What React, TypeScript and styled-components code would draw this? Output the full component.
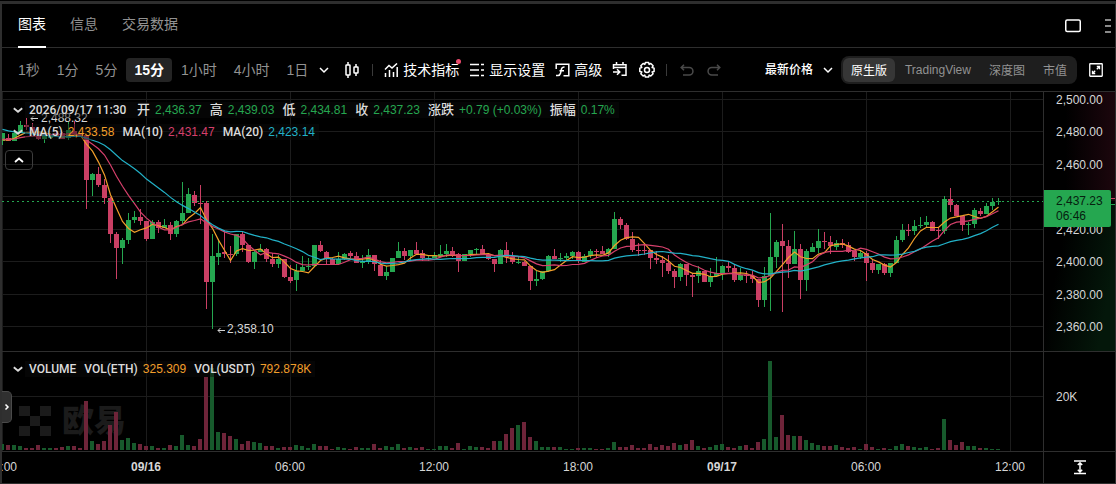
import React from "react";
import styled, { createGlobalStyle } from "styled-components";

const UP = "#25a750";
const DOWN = "#ca3f64";
const AMBER = "#f29f2b";
const PINK = "#d6406c";
const CYAN = "#22b1c7";
const LINE = "#2e2e2e";
const GRID = "#1c1c1c";
const FONT = `"Liberation Sans", "Noto Sans CJK SC", sans-serif`;
const LABEL_FONT = `Roboto, "Noto Sans CJK SC", sans-serif`;

const GlobalStyle = createGlobalStyle`
  *, *::before, *::after { box-sizing: border-box; }
  body { margin: 0; background: #000; color: #fff; font-family: ${FONT}; }
  button, select { font: inherit; color: inherit; background: none; border: 0; margin: 0; padding: 0; cursor: pointer; }
  svg { display: block; }
`;

/* ---------- market data: [dir, high, bodyTop, bodyBottom, low, volume] in chart units ---------- */
type Bar = [number, number, number, number, number, number];
const G = 1;
const R = 0;
const bars: Bar[] = [
  [G,133,133,141,145,6],[R,134,138,141,141,5],[G,131,133,141,141,5],[G,121,125,133,133,4],[R,118,125,127,130,2],
  [R,123,127,133,134,2],[R,133,133,139,140,5],[G,136,136,139,143,2],[G,133,134,138,139,2],[R,131,133,136,137,2],
  [R,132,133,139,139,3],[G,122,130,138,140,4],[R,121,131,134,137,4],[R,133,134,135,136,2],[R,135,135,180,209,49],
  [G,173,174,180,196,9],[R,167,174,185,187,6],[R,179,185,198,204,9],[R,197,198,234,243,25],[R,232,234,248,279,38],
  [G,238,240,248,264,10],[G,213,220,240,244,12],[G,211,217,220,223,7],[R,209,217,221,225,6],[R,221,221,239,241,4],
  [G,220,222,239,239,4],[R,220,222,228,233,2],[G,219,225,228,228,2],[R,222,225,234,240,5],[G,220,221,234,237,4],
  [G,182,213,221,225,15],[G,188,194,213,213,5],[R,191,195,203,206,4],[R,185,203,204,224,11],[R,201,203,282,309,73],
  [G,234,256,282,329,82],[G,239,253,257,265,18],[R,230,252,254,258,17],[R,246,254,255,263,14],[G,234,234,254,256,11],
  [R,232,234,245,252,6],[R,245,245,262,263,9],[G,250,252,262,269,8],[G,244,249,252,252,7],[R,248,249,259,262,4],
  [R,253,259,264,267,4],[G,255,259,264,268,2],[R,259,259,277,278,3],[R,265,277,281,283,3],[G,264,271,280,291,5],
  [G,256,267,271,271,4],[G,258,266,267,270,2],[G,245,245,266,266,6],[R,241,245,251,252,4],[R,251,252,259,265,4],
  [R,258,259,264,265,1],[G,252,259,264,265,3],[G,253,254,259,260,2],[R,251,253,256,258,1],[R,252,256,263,263,3],
  [G,255,261,263,268,2],[G,249,255,261,264,2],[R,255,255,264,271,6],[R,260,265,276,276,2],[G,266,272,276,280,4],
  [G,258,258,272,272,3],[G,242,251,258,258,6],[R,248,251,256,260,2],[G,250,250,256,260,3],[R,242,250,254,254,2],
  [R,250,253,258,261,3],[G,255,258,259,261,1],[G,252,255,258,258,1],[G,245,254,256,257,4],[G,244,251,254,257,4],
  [R,247,251,255,257,2],[R,253,254,261,272,7],[G,254,254,261,261,1],[G,250,250,254,257,4],[G,248,249,250,254,3],
  [R,245,249,254,254,3],[R,253,254,259,260,2],[R,259,259,264,272,9],[G,249,250,264,264,9],[R,242,250,257,263,16],
  [R,252,257,262,264,22],[G,257,262,263,264,25],[R,261,262,266,266,28],[R,266,266,281,290,13],[G,271,279,281,286,9],
  [G,271,271,279,280,3],[G,255,256,271,272,3],[R,249,256,259,259,3],[G,253,258,259,262,3],[G,253,256,258,261,1],
  [G,251,252,256,259,1],[R,251,252,261,263,2],[G,254,256,262,262,2],[G,249,251,256,258,2],[R,249,251,252,258,1],
  [R,246,251,254,254,1],[G,248,249,254,257,2],[G,212,219,249,249,8],[R,217,219,225,229,3],[R,223,225,239,240,3],
  [R,232,239,250,252,5],[R,243,250,251,256,2],[R,244,250,251,255,2],[R,250,250,258,269,6],[R,251,258,260,264,3],
  [R,256,260,263,277,5],[R,255,263,271,274,4],[R,269,271,277,288,7],[G,263,264,277,281,5],[R,264,264,275,286,6],
  [R,274,275,277,297,10],[G,266,271,276,283,4],[R,271,271,282,282,2],[G,268,276,282,287,3],[G,257,273,276,276,5],
  [G,265,266,273,280,6],[R,262,266,268,272,3],[R,265,268,280,282,2],[G,268,275,280,281,4],[R,271,275,276,283,5],
  [R,271,276,279,283,2],[R,279,279,300,307,8],[G,267,276,300,307,11],[G,213,257,276,311,89],[G,240,242,257,268,13],
  [R,224,241,246,312,35],[R,240,246,264,278,15],[G,231,249,264,264,14],[R,244,249,280,299,14],[G,249,251,280,291,10],
  [G,243,247,252,252,7],[G,229,241,248,253,5],[R,232,241,242,249,4],[R,236,242,246,254,4],[G,240,243,247,250,5],
  [R,239,243,245,248,3],[R,242,245,252,253,2],[R,251,251,257,261,3],[G,251,253,257,259,1],[R,251,253,263,281,6],
  [R,260,263,270,273,3],[G,264,264,270,274,1],[R,263,264,273,275,2],[G,263,263,273,277,1],[G,236,240,263,263,4],
  [G,224,230,240,242,6],[R,224,230,231,236,4],[G,220,226,231,235,3],[G,217,225,226,228,2],[G,216,222,225,227,3],
  [R,221,222,231,231,1],[R,227,230,231,239,2],[G,196,199,231,234,31],[R,188,199,205,212,10],[R,204,205,216,216,5],
  [R,216,216,225,231,8],[G,222,224,225,235,4],[G,208,210,224,228,4],[R,208,211,214,216,2],[G,203,206,214,214,2],
  [G,198,202,206,210,1],[G,198,201,202,205,1],
];

/* closes that precede the visible range, so the averages start at the left edge */
const earlier = [110,112,114,116,118,120,122,124,126,128,138,138,138,138,138,141,141,141,141];
const closes = [...earlier, ...bars.map((b) => (b[0] ? b[2] : b[3]))];
const TOP = 92;
const STEP = 6;

function average(n: number) {
  return bars
    .map((_, i) => {
      const end = i + earlier.length + 1;
      const sum = closes.slice(end - n, end).reduce((a, c) => a + c, 0);
      return `${i * STEP + 0.5},${(sum / n - TOP + 0.5).toFixed(1)}`;
    })
    .join(" ");
}

const priceLines = [
  { y: 7, label: "2,500.00" },
  { y: 39, label: "2,480.00" },
  { y: 72, label: "2,460.00" },
  { y: 104, label: "" },
  { y: 137, label: "2,420.00" },
  { y: 169, label: "2,400.00" },
  { y: 202, label: "2,380.00" },
  { y: 234, label: "2,360.00" },
];
const timeLines = [
  { x: 0, label: "18:00" },
  { x: 144, label: "09/16", strong: true },
  { x: 288, label: "06:00" },
  { x: 432, label: "12:00" },
  { x: 576, label: "18:00" },
  { x: 720, label: "09/17", strong: true },
  { x: 864, label: "06:00" },
  { x: 1008, label: "12:00" },
];

/* ---------- layout ---------- */
const Panel = styled.main`
  margin-top: 1px;
  border: solid ${LINE};
  border-width: 3px 1px 1px 2px;
  overflow: hidden;
`;
const Header = styled.header`
  display: flex;
  align-items: stretch;
  justify-content: space-between;
  height: 44px;
  padding: 0 4px 0 16px;
  border-bottom: 1px solid ${LINE};
`;
const Tabs = styled.nav`
  display: flex;
  gap: 24px;
`;
const Tab = styled.button<{ $active?: boolean }>`
  height: 44px;
  padding-bottom: 4px;
  font-size: 14px;
  color: ${(p) => (p.$active ? "#fff" : "#929292")};
  border-bottom: 2px solid ${(p) => (p.$active ? "#fff" : "transparent")};
`;
const HeaderTools = styled.div`
  display: flex;
  align-items: center;
  gap: 24px;
`;
const Toolbar = styled.div`
  display: flex;
  align-items: center;
  justify-content: space-between;
  height: 44px;
  padding: 0 12px 0 8px;
  border-bottom: 1px solid ${LINE};
  white-space: nowrap;
`;
const Group = styled.div<{ $gap?: number; $before?: number }>`
  display: flex;
  align-items: center;
  gap: ${(p) => p.$gap ?? 0}px;
  margin-left: ${(p) => p.$before ?? 0}px;
`;
const Interval = styled.button<{ $active?: boolean }>`
  height: 24px;
  padding: 0 8px;
  border-radius: 4px;
  font-size: 14px;
  line-height: 24px;
  font-weight: ${(p) => (p.$active ? 700 : 400)};
  color: ${(p) => (p.$active ? "#fff" : "#929292")};
  background: ${(p) => (p.$active ? "#242424" : "none")};
`;
const Tool = styled.button<{ $muted?: boolean }>`
  position: relative;
  display: flex;
  align-items: center;
  gap: 4px;
  height: 24px;
  font-size: 14px;
  line-height: 24px;
  color: ${(p) => (p.$muted ? "#4a4a4a" : "#fff")};
`;
const Dot = styled.span`
  position: absolute;
  top: 1px;
  right: -2px;
  width: 5px;
  height: 5px;
  border-radius: 50%;
  background: #eb4b6d;
`;
const Divider = styled.span`
  width: 1px;
  height: 12px;
  background: #3a3a3a;
`;
const PriceSelect = styled.label`
  display: flex;
  align-items: center;
  gap: 9px;
  margin-right: 8px;
  select {
    appearance: none;
    font-size: 12px;
    font-weight: 500;
    line-height: 16px;
    outline: 0;
  }
`;
const Segments = styled.div`
  display: flex;
  gap: 2px;
  height: 28px;
  padding: 2px;
  margin-right: 12px;
  border-radius: 8px;
  background: #1e1e1e;
`;
const Segment = styled.button<{ $active?: boolean }>`
  padding: 0 8px;
  border-radius: 6px;
  font-size: 12px;
  color: ${(p) => (p.$active ? "#fff" : "#929292")};
  background: ${(p) => (p.$active ? "#363636" : "none")};
`;
const Row = styled.section<{ $line?: boolean }>`
  display: flex;
  border-bottom: ${(p) => (p.$line ? `1px solid ${LINE}` : "0")};
`;
const Plot = styled.div`
  position: relative;
  flex: 1;
  min-width: 0;
  overflow: hidden;
`;
const Axis = styled.div`
  position: relative;
  display: flex;
  align-items: center;
  flex: 0 0 72px;
  border-left: 1px solid ${LINE};
`;
const Canvas = styled.svg<{ $height: number }>`
  position: relative;
  width: 100%;
  height: ${(p) => p.$height}px;
  font-family: ${FONT};
  font-size: 12px;
  fill: #d6d6d6;
`;
const Legends = styled.div<{ $top: number }>`
  position: absolute;
  top: ${(p) => p.$top}px;
  left: 3px;
  display: flex;
  flex-direction: column;
  align-items: flex-start;
  gap: 6px;
`;
const Legend = styled.div`
  display: flex;
  align-items: center;
  gap: 2px;
  padding-left: 8px;
  height: 16px;
  font-family: ${LABEL_FONT};
  font-size: 12px;
  font-weight: 500;
  line-height: 16px;
  color: #dcdcdc;
  white-space: nowrap;
`;
const LegendValues = styled.div`
  display: flex;
  gap: 8px;
  padding: 0 4px;
  background: rgba(10, 10, 10, 0.45);
`;
const Stamp = styled.time`
  min-width: 100px;
`;
const Pair = styled.span<{ $cjk?: boolean }>`
  display: flex;
  gap: 5px;
  font-size: ${(p) => (p.$cjk ? 13 : 12)}px;
`;
const Value = styled.span<{ $color: string }>`
  font-family: ${FONT};
  font-size: 12px;
  font-weight: 400;
  color: ${(p) => p.$color};
`;
const Collapse = styled.button`
  display: flex;
  align-items: center;
  justify-content: center;
  width: 28px;
  height: 20px;
  margin-top: 4px;
  border: 1px solid #3d3d3d;
  border-radius: 4px;
`;
const PriceTag = styled.div`
  position: absolute;
  top: 98px;
  left: 0;
  width: 67px;
  padding: 4px 0 3px 12px;
  border-radius: 0 2px 2px 0;
  background: ${UP};
  color: #06210f;
  font-size: 12px;
  line-height: 15px;
`;
const Drawer = styled.button`
  position: absolute;
  top: 39px;
  left: 0;
  display: flex;
  align-items: center;
  justify-content: center;
  width: 10px;
  height: 32px;
  border-radius: 0 5px 5px 0;
  border: 1px solid #4a4a4a;
  border-left: 0;
  background: #303030;
`;
const Watermark = styled.div`
  position: absolute;
  left: 17px;
  top: 53px;
  display: flex;
  align-items: center;
  gap: 11px;
  height: 32px;
  font-size: 32px;
  font-weight: 900;
  line-height: 32px;
  color: #1b1b1b;
`;
const ScaleButton = styled.button`
  margin: 0 auto;
`;

/* ---------- icons ---------- */
type IconProps = { w: number; h: number; children: React.ReactNode; sw?: number };
const Icon = ({ w, h, children, sw = 1.5 }: IconProps) => (
  <svg width={w} height={h} viewBox={`0 0 ${w} ${h}`} fill="none" stroke="currentColor" strokeWidth={sw} aria-hidden>
    {children}
  </svg>
);
const ChevronDown = () => (
  <Icon w={10} h={10}><path d="M1 3l4 4 4-4" /></Icon>
);
const LegendChevron = () => (
  <Icon w={10} h={10} sw={1.8}><path d="M.8 3.2L5 6.8l4.2-3.6" /></Icon>
);

const Pairs = ({ label, value, color, cjk }: { label: string; value: string; color: string; cjk?: boolean }) => (
  <Pair $cjk={cjk}>
    <span>{label}</span>
    <Value $color={color}>{value}</Value>
  </Pair>
);

const VerticalGrid = () => (
  <>
    {timeLines.map((t) => (
      <rect key={t.x} x={t.x} y={0} width={1} height="100%" fill={GRID} />
    ))}
  </>
);

const PricePlot = () => (
  <Canvas $height={259} aria-label="Price">
    <VerticalGrid />
    {priceLines.map((p) => (
      <rect key={p.y} x={0} y={p.y} width="100%" height={1} fill={GRID} />
    ))}
    {bars.map(([dir, high, top, bottom, low], i) => (
      <g key={i} fill={dir ? UP : DOWN}>
        <rect x={i * STEP} y={high - TOP} width={1} height={low - high} />
        <rect x={i * STEP - 2} y={top - TOP} width={5} height={Math.max(1, bottom - top)} />
      </g>
    ))}
    <g fill="none" strokeWidth={1.2}>
      <polyline points={average(5)} stroke={AMBER} />
      <polyline points={average(10)} stroke={PINK} />
      <polyline points={average(20)} stroke={CYAN} />
    </g>
    <line x1={0} x2="100%" y1={109.5} y2={109.5} stroke={UP} strokeDasharray="2 3" />
    <g stroke="#d2d2d2" fill="none">
      <path d="M36 26.5h-7M31.5 24l-2.5 2.5 2.5 2.5" />
      <path d="M223 238.5h-7M218.5 236l-2.5 2.5 2.5 2.5" />
    </g>
    <text x={39} y={30}>2,488.32</text>
    <text x={225} y={241}>2,358.10</text>
  </Canvas>
);

const VolumePlot = () => (
  <Canvas $height={99} aria-label="Volume">
    <VerticalGrid />
    <rect x={0} y={44} width="100%" height={1} fill={GRID} />
    {bars.map(([dir, , , , , volume], i) => (
      <rect key={i} x={i * STEP - 2} y={98 - volume} width={4} height={volume} fill={dir ? "#175a2c" : "#6e2439"} />
    ))}
  </Canvas>
);

const segments = ["原生版", "TradingView", "深度图", "市值"];
const intervals = ["1秒", "1分", "5分", "15分", "1小时", "4小时", "1日"];

export default function App() {
  return (
    <>
      <GlobalStyle />
      <Panel>
        <Header>
          <Tabs>
            <Tab $active>图表</Tab>
            <Tab>信息</Tab>
            <Tab>交易数据</Tab>
          </Tabs>
          <HeaderTools>
            <Tool aria-label="布局">
              <Icon w={16} h={14}><rect x="0.75" y="1" width="14.5" height="11.5" rx="1.5" /></Icon>
            </Tool>
            <Tool aria-label="更多">
              <Icon w={6} h={16} sw={2}><path stroke="#8a8a8a" d="M0 2h6M0 8h6M0 14h6" /></Icon>
            </Tool>
          </HeaderTools>
        </Header>

        <Toolbar>
          <Group>
            <Group $gap={1}>
              {intervals.map((t) => (
                <Interval key={t} $active={t === "15分"}>{t}</Interval>
              ))}
            </Group>
            <Group $gap={16} $before={3}>
              <Tool aria-label="更多周期"><ChevronDown /></Tool>
              <Tool aria-label="图表类型">
                <Icon w={14} h={16}>
                  <rect x="1" y="3" width="4" height="10" rx="0.5" />
                  <rect x="9" y="5" width="4" height="6" rx="0.5" />
                  <path d="M3 0v3M3 13v3M11 2v3M11 11v3" />
                </Icon>
              </Tool>
            </Group>
            <Group $gap={10} $before={13}>
              <Divider />
              <Tool>
                <Icon w={16} h={14}>
                  <path d="M2 6.5l4-4 3 2.5 5-4.5M2.5 14v-4M6.5 14V7M10.5 14V9M14.2 14V4" />
                </Icon>
                技术指标
                <Dot />
              </Tool>
              <Tool>
                <Icon w={16} h={14}>
                  <path d="M1 1.5h9M1 7h9M1 12.5h9M12 1.5h3M12 7h3M12 12.5h3" />
                </Icon>
                显示设置
              </Tool>
              <Tool>
                <Icon w={15} h={14}>
                  <path d="M1.2 6V1.2h12.6v11.6H8.5M1 12.6h2c1.6 0 2.1-.8 2.5-2.3l1-4.3c.4-1.6 1-2 3-2M4.5 7.8h4.5" />
                </Icon>
                高级
              </Tool>
              <Tool aria-label="跳转日期">
                <Icon w={16} h={15}>
                  <path d="M1.5 7V2.7h12.5v10.6H9.5M1.5 5.5h12.5M4.5 0v3M11 0v3M1 10h6.5M5 7.2L7.8 10 5 12.8" />
                </Icon>
              </Tool>
              <Tool aria-label="设置">
                <Icon w={18} h={18}>
                  <circle cx="9" cy="9" r="2.5" />
                  <path strokeLinejoin="round" d="M7.4 1.5h3.2l.5 1.9 1.7-.9 2.3 2.3-1 1.7 2 .6v3.4l-2 .5 1 1.8-2.3 2.2-1.7-.9-.5 2H7.4l-.6-2-1.7.9-2.3-2.2 1-1.8-2-.5V7.1l2-.6-1-1.7 2.3-2.3 1.7.9z" />
                </Icon>
              </Tool>
              <Divider />
            </Group>
            <Group $gap={13} $before={13}>
              <Tool $muted aria-label="撤销">
                <Icon w={14} h={12}><path d="M4 .7L1.2 3.5 4 6.3M1.2 3.5h8a3.7 3.7 0 010 7.5H3" /></Icon>
              </Tool>
              <Tool $muted aria-label="重做">
                <Icon w={14} h={12}><path d="M10 .7l2.8 2.8L10 6.3M12.8 3.5h-8a3.7 3.7 0 000 7.5H11" /></Icon>
              </Tool>
            </Group>
          </Group>
          <Group>
            <PriceSelect>
              <select aria-label="价格类型" defaultValue="last">
                <option value="last">最新价格</option>
              </select>
              <ChevronDown />
            </PriceSelect>
            <Segments>
              {segments.map((s, i) => (
                <Segment key={s} $active={i === 0}>{s}</Segment>
              ))}
            </Segments>
            <Tool aria-label="全屏">
              <Icon w={14} h={14} sw={1.3}>
                <rect x="0.75" y="0.75" width="12.5" height="12.5" rx="0.5" />
                <path d="M7.8 3.5h2.7v2.7M10.5 3.5L7.8 6.2M6.2 10.5H3.5V7.8M3.5 10.5l2.7-2.7" />
              </Icon>
            </Tool>
          </Group>
        </Toolbar>

        <Row $line>
          <Plot>
            <PricePlot />
            <Legends $top={10}>
              <Legend>
                <LegendChevron />
                <LegendValues>
                  <Stamp>2026/09/17 11:30</Stamp>
                  <Pairs cjk label="开" value="2,436.37" color={UP} />
                  <Pairs cjk label="高" value="2,439.03" color={UP} />
                  <Pairs cjk label="低" value="2,434.81" color={UP} />
                  <Pairs cjk label="收" value="2,437.23" color={UP} />
                  <Pairs cjk label="涨跌" value="+0.79 (+0.03%)" color={UP} />
                  <Pairs cjk label="振幅" value="0.17%" color={UP} />
                </LegendValues>
              </Legend>
              <Legend>
                <LegendChevron />
                <LegendValues>
                  <Pairs label="MA(5)" value="2,433.58" color={AMBER} />
                  <Pairs label="MA(10)" value="2,431.47" color={PINK} />
                  <Pairs label="MA(20)" value="2,423.14" color={CYAN} />
                </LegendValues>
              </Legend>
              <Collapse aria-label="收起">
                <Icon w={10} h={8} sw={1.8}><path d="M1 6l4-3.5L9 6" /></Icon>
              </Collapse>
            </Legends>
          </Plot>
          <Axis>
            <Canvas $height={259}>
              <defs>
                <linearGradient id="asks"><stop offset="0.3" stopColor="#000" /><stop offset="1" stopColor="#1c060d" /></linearGradient>
                <linearGradient id="bids" x2="1" y2="0.4"><stop offset="0.3" stopColor="#000" /><stop offset="1" stopColor="#04170a" /></linearGradient>
              </defs>
              <rect width="100%" height={109} fill="url(#asks)" />
              <rect y={112} width="100%" height={147} fill="url(#bids)" />
              {priceLines.map((p) => (
                <text key={p.y} x={12} y={p.y + 5}>{p.label}</text>
              ))}
              <rect x={67} y={106} width={4} height={1} fill={DOWN} />
              <rect x={67} y={112} width={4} height={1} fill={UP} />
            </Canvas>
            <PriceTag>
              <div>2,437.23</div>
              <div>06:46</div>
            </PriceTag>
          </Axis>
        </Row>

        <Row $line>
          <Plot>
            <Watermark>
              <svg width="32" height="30" viewBox="0 0 32 30" fill="#1b1b1b" aria-hidden>
                <path d="M0 0h11v10H0zM21 0h11v10H21zM11 10h10v10H11zM0 20h11v10H0zM21 20h11v10H21z" />
              </svg>
              <span>欧易</span>
            </Watermark>
            <VolumePlot />
            <Legends $top={9}>
              <Legend>
                <LegendChevron />
                <LegendValues>
                  <span>VOLUME</span>
                  <Pairs label="VOL(ETH)" value="325.309" color={AMBER} />
                  <Pairs label="VOL(USDT)" value="792.878K" color={AMBER} />
                </LegendValues>
              </Legend>
            </Legends>
            <Drawer aria-label="展开侧栏">
              <Icon w={6} h={8}><path d="M1.5 1.5L4 4 1.5 6.5" /></Icon>
            </Drawer>
          </Plot>
          <Axis>
            <Canvas $height={99}><text x={12} y={49}>20K</text></Canvas>
          </Axis>
        </Row>

        <Row>
          <Plot>
            <Canvas $height={31} textAnchor="middle">
              {timeLines.map((t) => (
                <text key={t.x} x={t.x} y={19} fontWeight={t.strong ? 700 : 400}>{t.label}</text>
              ))}
            </Canvas>
          </Plot>
          <Axis>
            <ScaleButton aria-label="自动缩放">
              <Icon w={14} h={15}>
                <path d="M1 1h12M1 13.5h12M7 3v9M4.8 5L7 2.8 9.2 5M4.8 9.7L7 11.9l2.2-2.2" />
              </Icon>
            </ScaleButton>
          </Axis>
        </Row>
      </Panel>
    </>
  );
}
